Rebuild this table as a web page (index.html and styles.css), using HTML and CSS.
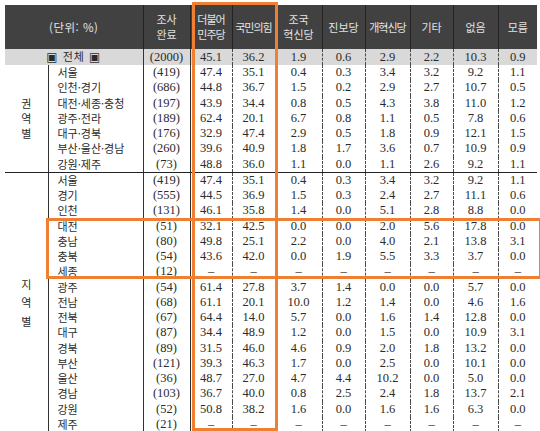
FILE: index.html
```html
<!DOCTYPE html>
<html lang="ko">
<head>
<meta charset="utf-8">
<title>정당 지지도</title>
<link rel="stylesheet" href="styles.css">
</head>
<body>
<div class="page">
<table class="tbl">
<colgroup>
<col class="c-grp"><col class="c-lbl"><col class="c-n"><col class="c-d1"><col class="c-d2"><col class="c-d3"><col class="c-d4"><col class="c-d5"><col class="c-d6"><col class="c-d7"><col class="c-d8">
</colgroup>
<thead>
<tr>
<th colspan="2" class="h-unit">(단위: %)</th>
<th>조사<br>완료</th>
<th class="tight">더불어<br>민주당</th>
<th class="tight">국민의힘</th>
<th>조국<br>혁신당</th>
<th>진보당</th>
<th class="tight">개혁신당</th>
<th>기타</th>
<th>없음</th>
<th>모름</th>
</tr>
</thead>
<tbody class="total">
<tr><td colspan="2" class="lbl-total"><span class="box">▣</span> 전체 <span class="box">▣</span></td><td class="n">(2000)</td><td>45.1</td><td>36.2</td><td>1.9</td><td>0.6</td><td>2.9</td><td>2.2</td><td>10.3</td><td>0.9</td></tr>
</tbody>
<tbody class="sec">
<tr><td rowspan="7" class="grp g1">권<br>역<br>별</td><td class="lbl">서울</td><td class="n">(419)</td><td>47.4</td><td>35.1</td><td>0.4</td><td>0.3</td><td>3.4</td><td>3.2</td><td>9.2</td><td>1.1</td></tr>
<tr><td class="lbl">인천·경기</td><td class="n">(686)</td><td>44.8</td><td>36.7</td><td>1.5</td><td>0.2</td><td>2.9</td><td>2.7</td><td>10.7</td><td>0.5</td></tr>
<tr><td class="lbl">대전·세종·충청</td><td class="n">(197)</td><td>43.9</td><td>34.4</td><td>0.8</td><td>0.5</td><td>4.3</td><td>3.8</td><td>11.0</td><td>1.2</td></tr>
<tr><td class="lbl">광주·전라</td><td class="n">(189)</td><td>62.4</td><td>20.1</td><td>6.7</td><td>0.8</td><td>1.1</td><td>0.5</td><td>7.8</td><td>0.6</td></tr>
<tr><td class="lbl">대구·경북</td><td class="n">(176)</td><td>32.9</td><td>47.4</td><td>2.9</td><td>0.5</td><td>1.8</td><td>0.9</td><td>12.1</td><td>1.5</td></tr>
<tr><td class="lbl">부산·울산·경남</td><td class="n">(260)</td><td>39.6</td><td>40.9</td><td>1.8</td><td>1.7</td><td>3.6</td><td>0.7</td><td>10.9</td><td>0.9</td></tr>
<tr><td class="lbl">강원·제주</td><td class="n">(73)</td><td>48.8</td><td>36.0</td><td>1.1</td><td>0.0</td><td>1.1</td><td>2.6</td><td>9.2</td><td>1.1</td></tr>
</tbody>
<tbody class="sec">
<tr><td rowspan="17" class="grp g2">지<br>역<br>별</td><td class="lbl">서울</td><td class="n">(419)</td><td>47.4</td><td>35.1</td><td>0.4</td><td>0.3</td><td>3.4</td><td>3.2</td><td>9.2</td><td>1.1</td></tr>
<tr><td class="lbl">경기</td><td class="n">(555)</td><td>44.5</td><td>36.9</td><td>1.5</td><td>0.3</td><td>2.4</td><td>2.7</td><td>11.1</td><td>0.6</td></tr>
<tr><td class="lbl">인천</td><td class="n">(131)</td><td>46.1</td><td>35.8</td><td>1.4</td><td>0.0</td><td>5.1</td><td>2.8</td><td>8.8</td><td>0.0</td></tr>
<tr><td class="lbl">대전</td><td class="n">(51)</td><td>32.1</td><td>42.5</td><td>0.0</td><td>0.0</td><td>2.0</td><td>5.6</td><td>17.8</td><td>0.0</td></tr>
<tr><td class="lbl">충남</td><td class="n">(80)</td><td>49.8</td><td>25.1</td><td>2.2</td><td>0.0</td><td>4.0</td><td>2.1</td><td>13.8</td><td>3.1</td></tr>
<tr><td class="lbl">충북</td><td class="n">(54)</td><td>43.6</td><td>42.0</td><td>0.0</td><td>1.9</td><td>5.5</td><td>3.3</td><td>3.7</td><td>0.0</td></tr>
<tr><td class="lbl">세종</td><td class="n">(12)</td><td>–</td><td>–</td><td>–</td><td>–</td><td>–</td><td>–</td><td>–</td><td>–</td></tr>
<tr><td class="lbl">광주</td><td class="n">(54)</td><td>61.4</td><td>27.8</td><td>3.7</td><td>1.4</td><td>0.0</td><td>0.0</td><td>5.7</td><td>0.0</td></tr>
<tr><td class="lbl">전남</td><td class="n">(68)</td><td>61.1</td><td>20.1</td><td>10.0</td><td>1.2</td><td>1.4</td><td>0.0</td><td>4.6</td><td>1.6</td></tr>
<tr><td class="lbl">전북</td><td class="n">(67)</td><td>64.4</td><td>14.0</td><td>5.7</td><td>0.0</td><td>1.6</td><td>1.4</td><td>12.8</td><td>0.0</td></tr>
<tr><td class="lbl">대구</td><td class="n">(87)</td><td>34.4</td><td>48.9</td><td>1.2</td><td>0.0</td><td>1.5</td><td>0.0</td><td>10.9</td><td>3.1</td></tr>
<tr><td class="lbl">경북</td><td class="n">(89)</td><td>31.5</td><td>46.0</td><td>4.6</td><td>0.9</td><td>2.0</td><td>1.8</td><td>13.2</td><td>0.0</td></tr>
<tr><td class="lbl">부산</td><td class="n">(121)</td><td>39.3</td><td>46.3</td><td>1.7</td><td>0.0</td><td>2.5</td><td>0.0</td><td>10.1</td><td>0.0</td></tr>
<tr><td class="lbl">울산</td><td class="n">(36)</td><td>48.7</td><td>27.0</td><td>4.7</td><td>4.4</td><td>10.2</td><td>0.0</td><td>5.0</td><td>0.0</td></tr>
<tr><td class="lbl">경남</td><td class="n">(103)</td><td>36.7</td><td>40.0</td><td>0.8</td><td>2.5</td><td>2.4</td><td>1.8</td><td>13.7</td><td>2.1</td></tr>
<tr><td class="lbl">강원</td><td class="n">(52)</td><td>50.8</td><td>38.2</td><td>1.6</td><td>0.0</td><td>1.6</td><td>1.6</td><td>6.3</td><td>0.0</td></tr>
<tr><td class="lbl">제주</td><td class="n">(21)</td><td>–</td><td>–</td><td>–</td><td>–</td><td>–</td><td>–</td><td>–</td><td>–</td></tr>
</tbody>
</table>
<div class="hl hl-party"></div>
<div class="hl hl-region"></div>
</div>
</body>
</html>
```
FILE: styles.css
```css
html, body {
  margin: 0;
  background: #ffffff;
}

.page {
  position: relative;
  width: 540px;
  height: 431px;
  padding: 5px 0 0 5px;
  box-sizing: border-box;
  overflow: hidden;
}

.tbl {
  border-collapse: collapse;
  table-layout: fixed;
  width: 532px;
  font-family: "Liberation Serif", "Times New Roman", serif;
  font-size: 12.5px;
  color: #2b2b2b;
}

.c-grp { width: 43px; }
.c-lbl { width: 95px; }
.c-n { width: 47px; }
.c-d1 { width: 42px; }
.c-d2 { width: 43px; }
.c-d3 { width: 47px; }
.c-d4 { width: 43px; }
.c-d5 { width: 45px; }
.c-d6 { width: 43px; }
.c-d7 { width: 45px; }
.c-d8 { width: 39px; }

th {
  background: #414141;
  color: #e2e2e2;
  font-family: "Noto Sans CJK KR", "Noto Sans", sans-serif;
  font-weight: normal;
  font-size: 11px;
  line-height: 15px;
  height: 44px;
  padding: 0;
  border-right: 1px solid #222222;
  white-space: nowrap;
  overflow: hidden;
}

th:last-child {
  border-right: none;
}

th.tight {
  letter-spacing: -1px;
}

th.h-unit {
  font-size: 11.5px;
  letter-spacing: 0.5px;
}

td {
  padding: 0;
  height: 15.25px;
  line-height: 15px;
  text-align: center;
  white-space: nowrap;
  border-right: 1px dashed #4a4a4a;
}

td:last-child {
  border-right: none;
}

.total td {
  background: #d9d9d9;
}

.lbl-total {
  font-family: "Noto Sans CJK KR", sans-serif;
  font-size: 11px;
  letter-spacing: 1px;
  border-right: 1px solid #333333;
}

.box {
  font-family: "DejaVu Sans", sans-serif;
  font-size: 12px;
}

td.n {
  border-right: 1px solid #333333;
}

td.lbl {
  text-align: left;
  padding-left: 9px;
  font-family: "Noto Sans CJK KR", sans-serif;
  font-size: 11px;
  border-right: 1px solid #333333;
}

td.grp {
  font-family: "Noto Sans CJK KR", sans-serif;
  font-size: 11px;
  border-right: 1px solid #333333;
  border-bottom: 1px solid #222222;
  vertical-align: middle;
}

td.g1 {
  line-height: 15px;
}

td.g2 {
  line-height: 18.5px;
}

.sec tr:last-child td {
  border-bottom: 1px solid #222222;
}

.hl {
  position: absolute;
  box-sizing: border-box;
  border: 3px solid #ee7f33;
}

.hl-party {
  left: 192px;
  top: 2px;
  width: 86px;
  height: 429px;
}

.hl-region {
  left: 46px;
  top: 218px;
  width: 496px;
  height: 61px;
}
```
